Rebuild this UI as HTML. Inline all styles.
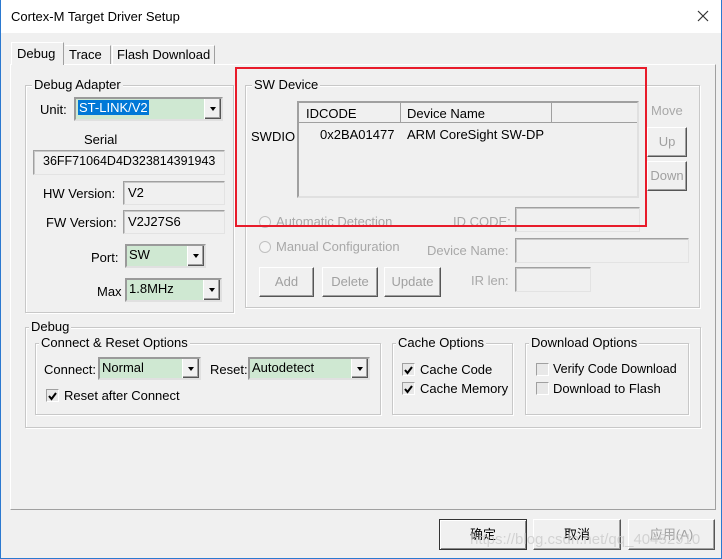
<!DOCTYPE html>
<html><head><meta charset="utf-8"><style>
*{box-sizing:border-box;margin:0;padding:0}
body{width:722px;height:559px;background:#f0f0f0;font-family:"Liberation Sans","Noto Sans CJK SC",sans-serif;font-size:13px;color:#000;position:relative;overflow:hidden}
.a{position:absolute;white-space:nowrap}
.win{position:absolute;left:0;top:0;width:722px;height:559px;border:1px solid #2b79d0;border-top:none}
.title{position:absolute;left:0;top:0;width:722px;height:33px;background:#fff}
.grp{position:absolute;border:1px solid #c8c8c8;box-shadow:inset 1px 1px 0 #fff,1px 1px 0 #fff}
.lg{position:absolute;top:-9px;left:6px;background:#f0f0f0;padding:0 2px;line-height:16px}
.box{position:absolute;border:1px solid #a0a0a0;border-right-color:#e3e3e3;border-bottom-color:#e3e3e3;background:#f0f0f0;padding:2px 4px;line-height:17px;box-shadow:inset 1px 1px 0 #c8c8c8}
.cmb{position:absolute;border:2px solid #9a9a9a;border-right-color:#e0e0e0;border-bottom-color:#e0e0e0;background:#cfe8d2;line-height:18px;padding-left:2px}
.cmb .ar{position:absolute;right:0;top:0;width:17px;height:100%;background:#f0f0f0;border-left:1px solid #fff;box-shadow:inset -1px -1px 0 #555,inset -2px -2px 0 #a0a0a0}
.cmb .ar:after{content:"";position:absolute;left:5px;top:8px;border:3.5px solid transparent;border-top:4px solid #000}
.btn{position:absolute;background:#f0f0f0;border:1px solid #fff;border-right-color:#555;border-bottom-color:#555;box-shadow:inset -1px -1px 0 #a0a0a0;text-align:center;color:#a0a0a0}
.dis{color:#a8a8a8}
.cb{position:absolute;width:13px;height:13px;border:1px solid #a0a0a0;border-right-color:#fff;border-bottom-color:#fff;background:#e8e8e8}
.rad{position:absolute;width:12px;height:12px;border-radius:50%;border:1px solid #c0c0c0;background:#f4f4f4}
</style></head><body>
<div class="title"></div>
<div class="a" style="left:11px;top:9px;font-size:13px">Cortex-M Target Driver Setup</div>
<svg class="a" style="left:697px;top:10px" width="12" height="12" viewBox="0 0 12 12"><path d="M1 1L11 11M11 1L1 11" stroke="#333" stroke-width="1.2"/></svg>

<div class="a" style="left:10px;top:64px;width:706px;height:446px;border:1px solid #fff;border-right-color:#a0a0a0;border-bottom-color:#a0a0a0"></div>
<div class="a" style="left:11px;top:42px;width:53px;height:23px;background:#f0f0f0;border:1px solid #fff;border-bottom:none;border-right:1px solid #a0a0a0;padding:3px 0 0 5px;font-size:13px">Debug</div>
<div class="a" style="left:65px;top:45px;width:46px;height:19px;border-right:1px solid #a0a0a0;border-top:1px solid #fff;padding:1px 0 0 4px;font-size:13px">Trace</div>
<div class="a" style="left:112px;top:45px;width:103px;height:19px;border-right:1px solid #a0a0a0;border-top:1px solid #fff;border-left:1px solid #fff;padding:1px 0 0 4px;font-size:13px">Flash Download</div>

<div class="grp" style="left:25px;top:85px;width:209px;height:228px"><div class="lg">Debug Adapter</div></div>
<div class="a" style="left:40px;top:102px">Unit:</div>
<div class="cmb" style="left:74px;top:97px;width:149px;height:24px"><span style="background:#0078d7;color:#fff;padding:0 1px">ST-LINK/V2</span><div class="ar"></div></div>
<div class="a" style="left:84px;top:132px">Serial</div>
<div class="box" style="left:33px;top:150px;width:192px;height:25px;padding-left:9px;font-size:12.5px">36FF71064D4D323814391943</div>
<div class="a" style="left:43px;top:186px">HW Version:</div>
<div class="box" style="left:123px;top:181px;width:102px;height:24px">V2</div>
<div class="a" style="left:46px;top:215px">FW Version:</div>
<div class="box" style="left:123px;top:210px;width:102px;height:24px">V2J27S6</div>
<div class="a" style="left:91px;top:250px">Port:</div>
<div class="cmb" style="left:125px;top:244px;width:81px;height:24px">SW<div class="ar"></div></div>
<div class="a" style="left:97px;top:284px">Max</div>
<div class="cmb" style="left:125px;top:278px;width:97px;height:24px">1.8MHz<div class="ar"></div></div>

<div class="grp" style="left:245px;top:85px;width:455px;height:223px"><div class="lg">SW Device</div></div>
<div class="a" style="left:251px;top:129px">SWDIO</div>
<div class="a" style="left:297px;top:101px;width:342px;height:97px;border:2px solid #a0a0a0;border-right-color:#e0e0e0;border-bottom-color:#e0e0e0;background:#f0f0f0">
 <div class="a" style="left:0;top:0;width:338px;height:20px;border-bottom:1px solid #a0a0a0"></div>
 <div class="a" style="left:101px;top:0;width:1px;height:20px;background:#a0a0a0"></div>
 <div class="a" style="left:252px;top:0;width:1px;height:20px;background:#a0a0a0"></div>
 <div class="a" style="left:7px;top:3px">IDCODE</div>
 <div class="a" style="left:108px;top:3px">Device Name</div>
 <div class="a" style="left:21px;top:24px">0x2BA01477</div>
 <div class="a" style="left:108px;top:24px">ARM CoreSight SW-DP</div>
</div>
<div class="a dis" style="left:651px;top:103px">Move</div>
<div class="btn" style="left:647px;top:127px;width:40px;height:30px;line-height:28px">Up</div>
<div class="btn" style="left:647px;top:161px;width:40px;height:30px;line-height:28px">Down</div>
<div class="rad" style="left:259px;top:216px"></div>
<div class="a dis" style="left:276px;top:214px">Automatic Detection</div>
<div class="a dis" style="left:453px;top:214px">ID CODE:</div>
<div class="box" style="left:515px;top:207px;width:125px;height:25px"></div>
<div class="rad" style="left:259px;top:241px"></div>
<div class="a dis" style="left:276px;top:239px">Manual Configuration</div>
<div class="a dis" style="left:427px;top:243px">Device Name:</div>
<div class="box" style="left:515px;top:238px;width:174px;height:25px"></div>
<div class="btn" style="left:259px;top:267px;width:55px;height:30px;line-height:28px">Add</div>
<div class="btn" style="left:322px;top:267px;width:56px;height:30px;line-height:28px">Delete</div>
<div class="btn" style="left:384px;top:267px;width:57px;height:30px;line-height:28px">Update</div>
<div class="a dis" style="left:471px;top:273px">IR len:</div>
<div class="box" style="left:515px;top:267px;width:76px;height:25px"></div>
<div class="a" style="left:235px;top:67px;width:412px;height:160px;border:2px solid #e81b2a"></div>

<div class="grp" style="left:25px;top:327px;width:676px;height:101px"><div class="lg" style="left:3px">Debug</div></div>
<div class="grp" style="left:35px;top:343px;width:346px;height:72px"><div class="lg" style="left:3px">Connect &amp; Reset Options</div></div>
<div class="a" style="left:44px;top:362px">Connect:</div>
<div class="cmb" style="left:98px;top:357px;width:103px;height:23px">Normal<div class="ar"></div></div>
<div class="a" style="left:210px;top:362px">Reset:</div>
<div class="cmb" style="left:248px;top:357px;width:122px;height:23px">Autodetect<div class="ar"></div></div>
<div class="cb" style="left:46px;top:389px"><svg width="11" height="11" viewBox="0 0 11 11"><path d="M2 5 L4.5 8 L9 2" stroke="#000" stroke-width="2" fill="none"/></svg></div>
<div class="a" style="left:64px;top:388px">Reset after Connect</div>
<div class="grp" style="left:392px;top:343px;width:121px;height:72px"><div class="lg" style="left:3px">Cache Options</div></div>
<div class="cb" style="left:402px;top:363px"><svg width="11" height="11" viewBox="0 0 11 11"><path d="M2 5 L4.5 8 L9 2" stroke="#000" stroke-width="2" fill="none"/></svg></div>
<div class="a" style="left:420px;top:362px">Cache Code</div>
<div class="cb" style="left:402px;top:382px"><svg width="11" height="11" viewBox="0 0 11 11"><path d="M2 5 L4.5 8 L9 2" stroke="#000" stroke-width="2" fill="none"/></svg></div>
<div class="a" style="left:420px;top:381px">Cache Memory</div>
<div class="grp" style="left:525px;top:343px;width:164px;height:72px"><div class="lg" style="left:3px">Download Options</div></div>
<div class="cb" style="left:536px;top:363px"></div>
<div class="a" style="left:553px;top:362px;font-size:12.5px">Verify Code Download</div>
<div class="cb" style="left:536px;top:382px"></div>
<div class="a" style="left:553px;top:381px">Download to Flash</div>

<div class="btn" style="left:439px;top:519px;width:88px;height:31px;line-height:29px;color:#000;border:1px solid #333;box-shadow:inset 1px 1px 0 #fff,inset -1px -1px 0 #888">确定</div>
<div class="btn" style="left:533px;top:519px;width:88px;height:31px;line-height:29px;color:#000">取消</div>
<div class="btn" style="left:628px;top:519px;width:87px;height:31px;line-height:29px">应用(A)</div>
<div class="a" style="left:470px;top:531px;color:rgba(200,200,200,0.75);font-size:15px">https://blog.csdn.net/qq_40452910</div>
<div class="win"></div>
</body></html>
